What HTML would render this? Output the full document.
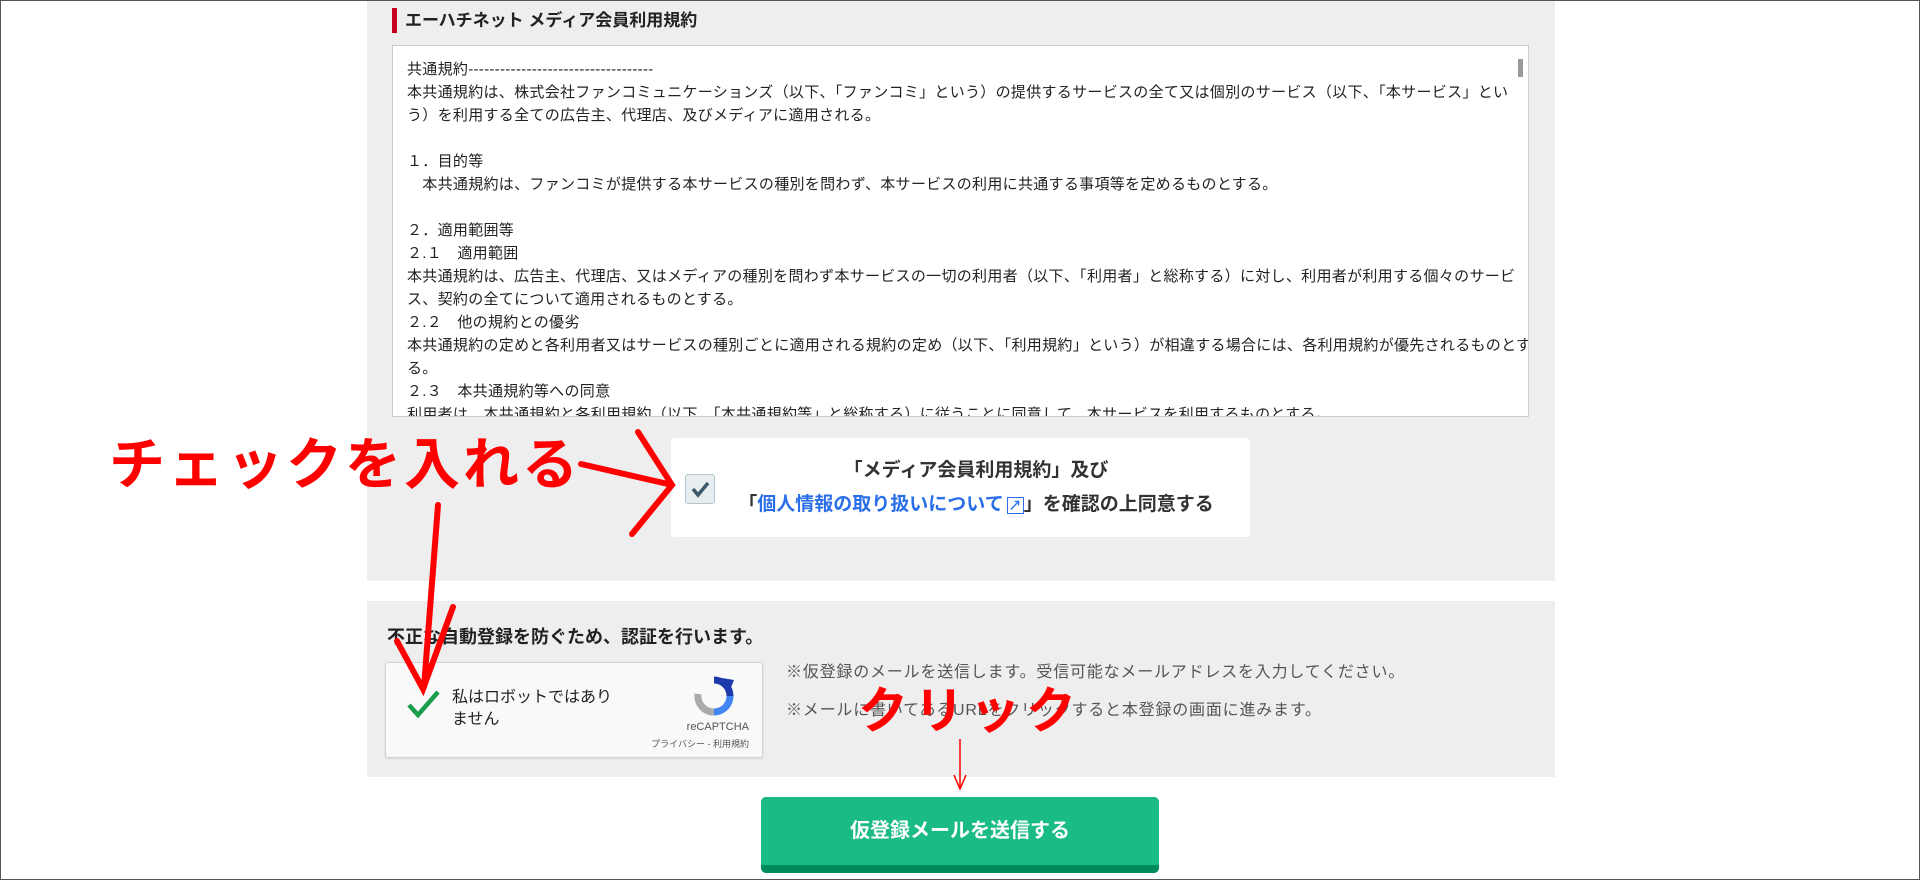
<!DOCTYPE html>
<html><head><meta charset="utf-8"><style>
*{margin:0;padding:0;box-sizing:border-box}
body{width:1920px;height:880px;background:#fff;position:relative;overflow:hidden;font-family:"Liberation Sans","Noto Sans CJK JP",sans-serif;color:#222;border:1px solid #555}
.abs{position:absolute}
.g{background:#eeeeee}
.ta{left:391px;top:44px;width:1137px;height:372px;background:#fff;border:1px solid #ccc;padding:12px 14px;font-size:15px;letter-spacing:0.3px;line-height:23px;color:#222;overflow:hidden;white-space:pre}
</style></head><body>
<div class="abs g" style="left:366px;top:0;width:1188px;height:580px"></div>
<div class="abs" style="left:391px;top:7px;width:5px;height:25px;background:#c8001e"></div>
<div class="abs" style="left:404px;top:7px;font-size:17px;font-weight:bold;line-height:25px">エーハチネット メディア会員利用規約</div>
<div class="abs ta">共通規約-----------------------------------
本共通規約は、株式会社ファンコミュニケーションズ（以下、「ファンコミ」という）の提供するサービスの全て又は個別のサービス（以下、「本サービス」とい
う）を利用する全ての広告主、代理店、及びメディアに適用される。

１．目的等
　本共通規約は、ファンコミが提供する本サービスの種別を問わず、本サービスの利用に共通する事項等を定めるものとする。

２．適用範囲等
２.１　適用範囲
本共通規約は、広告主、代理店、又はメディアの種別を問わず本サービスの一切の利用者（以下、「利用者」と総称する）に対し、利用者が利用する個々のサービ
ス、契約の全てについて適用されるものとする。
２.２　他の規約との優劣
本共通規約の定めと各利用者又はサービスの種別ごとに適用される規約の定め（以下、「利用規約」という）が相違する場合には、各利用規約が優先されるものとす
る。
２.３　本共通規約等への同意
利用者は、本共通規約と各利用規約（以下、「本共通規約等」と総称する）に従うことに同意して、本サービスを利用するものとする。</div>
<div class="abs" style="left:1517px;top:58px;width:5px;height:18px;background:#999"></div>
<div class="abs" style="left:670px;top:437px;width:579px;height:99px;background:#fff;border-radius:4px"></div>
<div class="abs" style="left:684px;top:473px;width:30px;height:30px;background:#e8edf0;border:1px solid #b8c4cc;border-radius:3px"></div>
<svg class="abs" style="left:684px;top:473px" width="30" height="30"><path d="M8 15 L13 21 L23 9" stroke="#3d5a6c" stroke-width="3.5" fill="none"/></svg>
<div class="abs" style="left:715px;top:453px;width:520px;text-align:center;font-size:19px;font-weight:bold;line-height:34px;color:#333">「メディア会員利用規約」及び<br>「<span style="color:#2a6ee8">個人情報の取り扱いについて<span style="font-size:13px;border:1.5px solid #2a6ee8;padding:0 1px;margin-left:3px">↗</span></span>」を確認の上同意する</div>

<div class="abs g" style="left:366px;top:600px;width:1188px;height:176px"></div>
<div class="abs" style="left:386px;top:622px;font-size:18px;font-weight:bold">不正な自動登録を防ぐため、認証を行います。</div>
<div class="abs" style="left:384px;top:661px;width:378px;height:96px;background:#f9f9f9;border:1px solid #d3d3d3;border-radius:3px;box-shadow:0 1px 2px rgba(0,0,0,.1)"></div>
<svg class="abs" style="left:405px;top:688px" width="36" height="30"><path d="M3 16 L12 26 L32 3" stroke="#1a9e4b" stroke-width="4.5" fill="none"/></svg>
<div class="abs" style="left:451px;top:686px;font-size:16px;line-height:22px;color:#222">私はロボットではあり<br>ません</div>
<svg class="abs" style="left:693px;top:675px" width="40" height="40"><path d="M20 4 A16 16 0 0 1 36 20" stroke="#1c3aa9" stroke-width="7" fill="none"/><path d="M36 20 A16 16 0 0 1 20 36" stroke="#4285f4" stroke-width="7" fill="none"/><path d="M20 36 A16 16 0 0 1 4 18" stroke="#ababab" stroke-width="7" fill="none"/><polygon points="28,2 40,4 36,14" fill="#1c3aa9"/></svg>
<div class="abs" style="left:660px;top:720px;width:88px;text-align:right;font-size:11px;color:#555">reCAPTCHA</div>
<div class="abs" style="left:620px;top:736px;width:128px;text-align:right;font-size:9px;color:#555">プライバシー - 利用規約</div>
<div class="abs" style="left:785px;top:661px;font-size:16px;letter-spacing:0.8px;color:#555;line-height:22px">※仮登録のメールを送信します。受信可能なメールアドレスを入力してください。</div>
<div class="abs" style="left:785px;top:699px;font-size:16px;letter-spacing:0.8px;color:#555;line-height:22px">※メールに書いてあるURLをクリックすると本登録の画面に進みます。</div>
<div class="abs" style="left:760px;top:796px;width:398px;height:76px;background:#008a5e;border-radius:5px"></div>
<div class="abs" style="left:760px;top:796px;width:398px;height:68px;background:#1abb87;border-radius:5px 5px 2px 2px;color:#fff;font-size:20px;font-weight:bold;text-align:center;line-height:68px">仮登録メールを送信する</div>

<div class="abs" style="left:108px;top:432px;font-size:56px;font-weight:bold;color:#f00;letter-spacing:3px;line-height:64px">チェックを入れる</div>
<div class="abs" style="left:857px;top:680px;font-size:50px;font-weight:bold;color:#f00;letter-spacing:6px;line-height:60px">クリック</div>
<svg class="abs" style="left:0;top:0" width="1920" height="880">
<g stroke="#f00" stroke-width="6" fill="none" stroke-linecap="round">
<path d="M580 463 L667 483"/><path d="M637 431 L671 484 L631 533"/>
<path d="M437 504 L423 686"/><path d="M396 640 L422 688 L452 606"/>
</g>
<path d="M959 738 L959 786" stroke="#f00" stroke-width="1.5"/>
<path d="M953 774 L959 788 L965 774" stroke="#f00" stroke-width="1.5" fill="none"/>
</svg>
</body></html>
